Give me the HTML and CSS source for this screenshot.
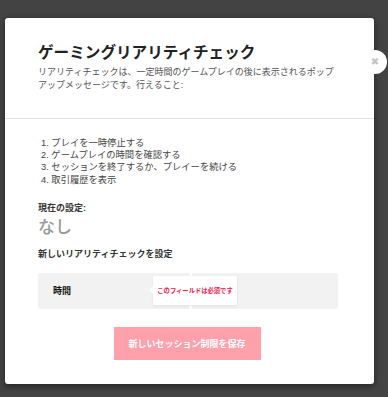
FILE: index.html
```html
<!DOCTYPE html>
<html lang="ja">
<head>
	<meta charset="UTF-8">
	<title>リアリティチェック</title>
	<link rel="stylesheet" href="styles.css">
</head>
<body>
	<div class="overlay">
		<div class="modal">
			<span class="close">&#x2716;</span>
			<div class="modal_head">
				<h2>ゲーミングリアリティチェック</h2>
				<p>リアリティチェックは、一定時間のゲームプレイの後に表示されるポップアップメッセージです。行えること:</p>
			</div>
			<div class="modal_body">
				<ol class="steps">
					<li>1. プレイを一時停止する</li>
					<li>2. ゲームプレイの時間を確認する</li>
					<li>3. セッションを終了するか、プレイーを続ける</li>
					<li>4. 取引履歴を表示</li>
				</ol>
				<p class="label">現在の設定:</p>
				<p class="current">なし</p>
				<p class="label">新しいリアリティチェックを設定</p>
				<div class="field">
					<div class="field_name">時間</div>
					<div class="field_value"></div>
					<div class="tip">このフィールドは必須です</div>
				</div>
				<div class="actions">
					<button class="save">新しいセッション制限を保存</button>
				</div>
			</div>
		</div>
	</div>
</body>
</html>
```

FILE: styles.css
```css
body,h2,p,ol,li{padding: 0;margin: 0;}
li{list-style: none;}
body{background: #434343;font-family: "Liberation Sans", "Noto Sans CJK JP", sans-serif;width: 388px;height: 397px;overflow: hidden;}

.overlay{padding: 18px 14px 13px 5px;}
.modal{background: #fff;border-radius: 3px;box-shadow: 0 2px 6px rgba(0,0,0,0.5);position: relative;height: 366px;box-sizing: border-box;}
.close{position: absolute;right: -13px;top: 32px;width: 24px;height: 24px;border-radius: 50%;background: #fff;color: #c4c4c4;font-size: 10px;line-height: 24px;text-align: center;font-family: "DejaVu Sans", sans-serif;}

/* 头部 */
.modal_head{padding: 25px 36px 26px 33px;border-bottom: 1px solid #e0e0e0;}
.modal_head h2{font-size: 15.6px;line-height: 20px;color: #222;font-weight: bold;}
.modal_head p{font-size: 9px;line-height: 13px;color: #555;margin-top: 3px;}

/* 内容 */
.modal_body{padding: 18px 36px 0 33px;}
.steps{padding-left: 3px;font-size: 9.3px;line-height: 12.2px;color: #444;}
.steps li{height: 12.2px;}
.label{font-size: 9px;font-weight: bold;color: #333;line-height: 12px;}
.steps + .label{margin-top: 16px;}
.current{font-size: 17px;color: #999;line-height: 24px;margin-top: 2px;margin-bottom: 8px;font-weight: 500;}

.field{margin-top: 13px;height: 36px;display: flex;position: relative;}
.field_name{flex: 0 0 151px;background: #f2f2f2;border-radius: 2px 0 0 2px;padding-left: 15px;box-sizing: border-box;font-size: 9px;font-weight: bold;line-height: 36px;color: #111;}
.field_value{flex: 1;background: #f2f2f2;border-radius: 0 2px 2px 0;margin-left: 3px;}
.tip{position: absolute;left: 115px;top: 3px;width: 84px;height: 29px;background: #fff;border-radius: 2px;box-shadow: 0 1px 3px rgba(0,0,0,0.08);color: #f0184a;font-size: 6.3px;font-weight: bold;line-height: 29px;text-align: center;white-space: nowrap;}
.tip:before{content: '';position: absolute;left: -4px;top: 10px;border: 4px solid transparent;border-left: 0;border-right-color: #fff;}

.actions{display: flex;justify-content: center;padding: 18px 0 0 0;margin-right: 2px;}
.save{width: 147px;height: 33px;border: 0;background: #ffa1ab;color: #fff;font-family: inherit;font-size: 9px;font-weight: bold;padding: 0;}
```
